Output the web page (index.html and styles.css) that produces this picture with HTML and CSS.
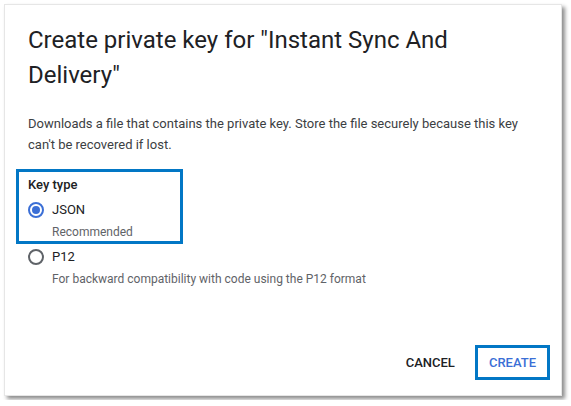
FILE: index.html
```html
<!DOCTYPE html>
<html>
<head>
<meta charset="utf-8">
<link rel="stylesheet" href="styles.css">
</head>
<body>
<div class="dialog">
  <h1 class="title">Create private key for "Instant Sync And Delivery"</h1>
  <p class="desc">Downloads a file that contains the private key. Store the file securely because this key can't be recovered if lost.</p>
  <div class="keytype">
    <div class="label">Key type</div>
    <div class="option">
      <span class="radio checked"></span>
      <div class="opt-text">
        <div class="opt-name">JSON</div>
        <div class="opt-hint">Recommended</div>
      </div>
    </div>
  </div>
  <div class="option p12">
    <span class="radio"></span>
    <div class="opt-text">
      <div class="opt-name">P12</div>
      <div class="opt-hint">For backward compatibility with code using the P12 format</div>
    </div>
  </div>
  <div class="actions">
    <button class="btn cancel">CANCEL</button>
    <button class="btn create">CREATE</button>
  </div>
</div>
</body>
</html>
```
FILE: styles.css
```css
html, body {
  margin: 0;
  padding: 0;
  background: #ffffff;
}
body {
  padding: 4px;
  font-family: Roboto, "Liberation Sans", sans-serif;
  color: #202124;
}
.dialog {
  width: 558px;
  height: 392px;
  box-sizing: border-box;
  background: #fff;
  border: 1px solid #e6e6e6;
  box-shadow: 3px 3px 4px rgba(0,0,0,0.45);
  padding: 18px 23px 0 23px;
  display: flex;
  flex-direction: column;
}
.title {
  margin: 0;
  font-size: 24px;
  font-weight: 400;
  line-height: 35px;
  color: #202124;
}
.desc {
  margin: 20px 0 0 0;
  font-size: 13px;
  line-height: 21px;
  color: #3c4043;
}
.keytype {
  margin: 14px 0 0 -12px;
  width: 167px;
  box-sizing: border-box;
  border: 3px solid #0277c5;
  padding: 3px 0 1px 9px;
}
.label {
  font-size: 13px;
  font-weight: 500;
  line-height: 20px;
  color: #202124;
}
.option {
  display: flex;
  align-items: flex-start;
  margin-top: 6px;
}
.p12 {
  margin-top: 4px;
}
.radio {
  width: 16px;
  height: 16px;
  border: 2px solid #5f6368;
  border-radius: 50%;
  box-sizing: border-box;
  margin: 1px 8px 0 0;
  position: relative;
  flex: none;
}
.radio.checked {
  border-color: #3b6fd6;
}
.radio.checked::after {
  content: "";
  position: absolute;
  left: 2px;
  top: 2px;
  width: 8px;
  height: 8px;
  border-radius: 50%;
  background: #3b6fd6;
}
.opt-name {
  font-size: 13px;
  line-height: 18px;
  color: #202124;
}
.opt-hint {
  font-size: 12px;
  line-height: 16px;
  margin-top: 5px;
  color: #5f6368;
}
.actions {
  margin-top: auto;
  margin-right: -12px;
  display: flex;
  justify-content: flex-end;
  align-items: center;
  gap: 17px;
  padding: 0 0 15px 0;
}
.btn {
  background: none;
  font-family: Roboto, "Liberation Sans", sans-serif;
  font-size: 13px;
  font-weight: 500;
  cursor: pointer;
}
.cancel {
  border: 3px solid transparent;
  color: #202124;
  padding: 7px 0;
}
.create {
  border: 3px solid #0277c5;
  color: #3b6fd6;
  padding: 7px 11px;
}
```
